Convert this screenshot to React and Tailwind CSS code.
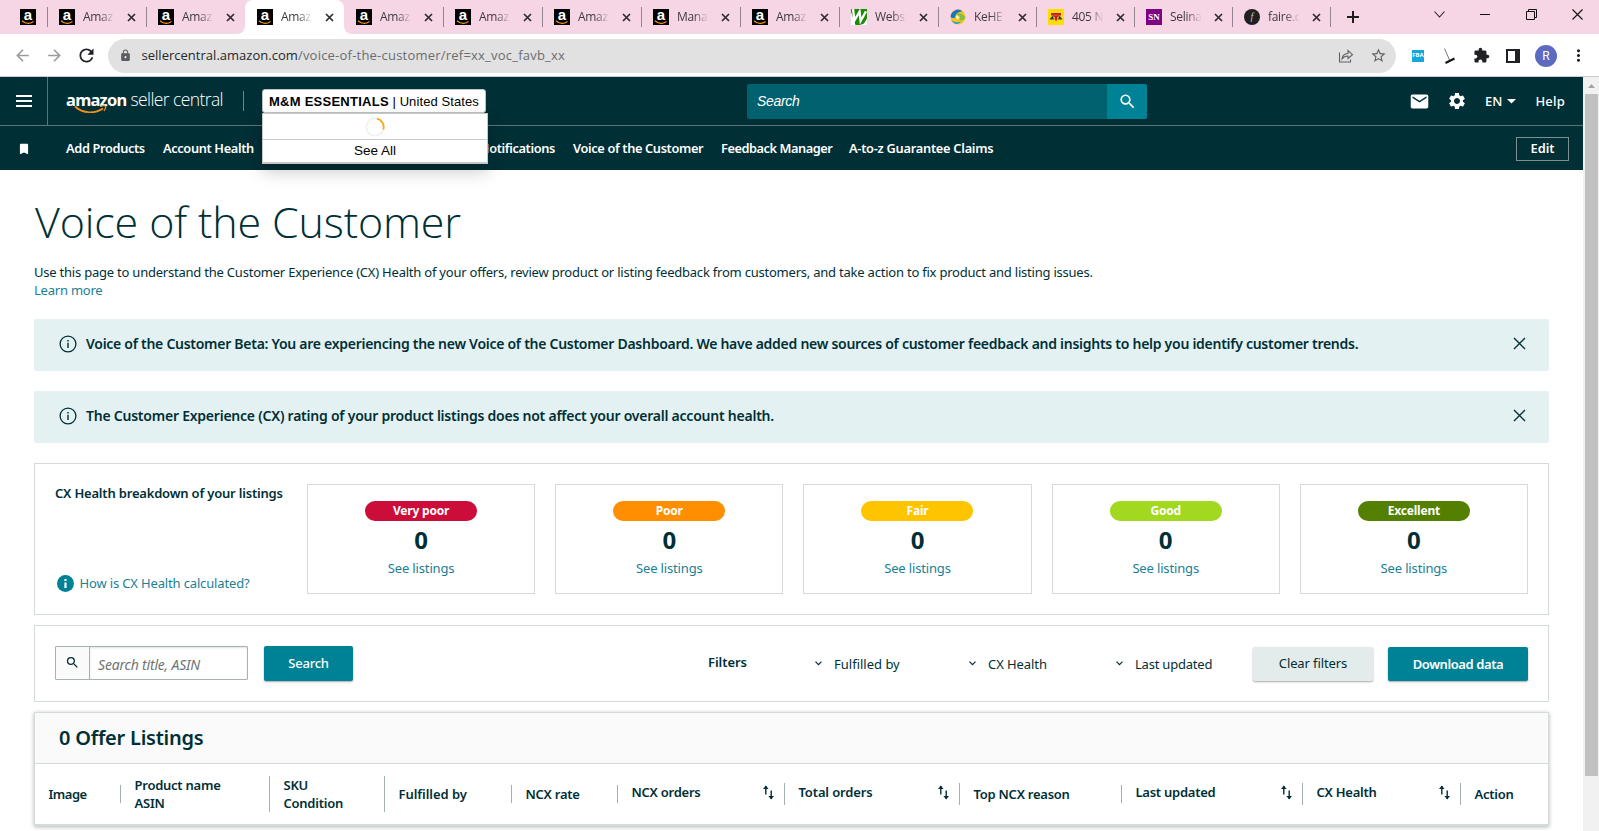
import React from 'react';
import {
  MdArrowBack, MdArrowForward, MdRefresh, MdLock, MdStarBorder, MdExtension, MdMoreVert,
  MdMail, MdSettings, MdSearch, MdBookmark,
} from 'react-icons/md';

function AmazonFavicon() {
  return (
    <span className="relative block size-4 shrink-0 bg-black text-center font-['Liberation_Sans',sans-serif] text-[15px] leading-[12px] font-bold text-white">
      a
      <svg className="absolute inset-x-0 bottom-0" width="16" height="5" viewBox="0 0 16 5">
        <path d="M2 .8C5.5 4 10 4 13.5 1.5" fill="none" stroke="#f79a1c" strokeWidth="1.2" />
      </svg>
    </span>
  );
}

function LeafFavicon() {
  return (
    <svg className="shrink-0" width="16" height="16" viewBox="0 0 16 16">
      <rect width="16" height="16" fill="#1d8a06" />
      <path d="M2 0 3.4 11.5 8.6 2.6 9.6 12 15 2.4" fill="none" stroke="#fff" strokeWidth="2.3" />
      <path d="M0 3v13h4.5zM9 16l4-1.5 3-5V16z" fill="#fff" />
    </svg>
  );
}

function SwirlFavicon() {
  return (
    <svg className="shrink-0" width="16" height="16" viewBox="0 0 16 16">
      <circle cx="8" cy="8" r="7.4" fill="#f6c51c" />
      <path d="M.6 8A7.4 7.4 0 0 1 12.500 2.200C9.500 2.500 5.500 4 5 8.500 3.500 9.500 1.500 9 .6 8z" fill="#1d74b8" />
      <path d="M6 5C9.500 3 13 5 15.300 8 14.500 11 12 12.500 9.500 11 11 8.500 9 6 6 5z" fill="#7fbf4a" />
      <path d="M1.200 11C4 13.500 8 13.800 11 12.500 9 16 3.500 16 1.200 11z" fill="#2a9fd8" />
      <path d="M6 6.200 9.500 8.200 7 10.800z" fill="#fff" />
    </svg>
  );
}

function RoadFavicon() {
  return (
    <svg className="shrink-0" width="16" height="16" viewBox="0 0 16 16">
      <rect width="16" height="16" fill="#ffdd00" />
      <path d="M3 4h10v2.500H3z" fill="#c8202f" />
      <path d="M1.500 10.500 4.500 6.500l1.500 4zM10 10.500l1.500-4 3 4z" fill="#2b3a67" />
      <path d="M4.500 6.500h7L9.500 9.500 8 12.500 6.500 9.500z" fill="#c8202f" />
      <path d="M5.500 7.500 7 9M10.500 7.500 9 9" stroke="#ffdd00" strokeWidth=".8" />
    </svg>
  );
}

function SnFavicon() {
  return (
    <span className="block size-4 shrink-0 bg-[#7d0382] text-center font-['Liberation_Serif',serif] text-[9px] leading-4 font-bold text-white">SN</span>
  );
}

function FaireFavicon() {
  return (
    <span className="block size-4 shrink-0 rounded-full bg-[#221f20] text-center font-['Liberation_Serif',serif] text-[10px] leading-[15px] text-[#c9c5c5] italic">f</span>
  );
}

const tabs = [
  { title: 'Amaz', Icon: AmazonFavicon },
  { title: 'Amaz', Icon: AmazonFavicon },
  { title: 'Amaz', Icon: AmazonFavicon, active: true },
  { title: 'Amaz', Icon: AmazonFavicon },
  { title: 'Amaz', Icon: AmazonFavicon },
  { title: 'Amaz', Icon: AmazonFavicon },
  { title: 'Mana', Icon: AmazonFavicon },
  { title: 'Amaz', Icon: AmazonFavicon },
  { title: 'Webst', Icon: LeafFavicon },
  { title: 'KeHE', Icon: SwirlFavicon },
  { title: '405 N', Icon: RoadFavicon },
  { title: 'Selina', Icon: SnFavicon },
  { title: 'faire.c', Icon: FaireFavicon },
];

function Tab({ title, Icon, active, divider, width }) {
  return (
    <div className={`relative flex h-[34px] shrink-0 items-center pl-3 ${width} ${active ? 'rounded-t-lg bg-white' : ''}`}>
      {divider && <span className="absolute top-[7px] left-0 h-5 w-px bg-[#94848f]" />}
      {active && (
        <>
          <svg className="absolute bottom-0 -left-2" width="8" height="8"><path d="M8 0v8H0a8 8 0 0 0 8-8z" fill="#fff" /></svg>
          <svg className="absolute -right-2 bottom-0" width="8" height="8"><path d="M0 0v8h8a8 8 0 0 1-8-8z" fill="#fff" /></svg>
        </>
      )}
      <Icon />
      <span className="ml-2 w-[33px] text-[12px] tracking-[-0.3px] whitespace-nowrap text-[#3f3a3e] [mask-image:linear-gradient(to_right,black_50%,transparent_96%)]">{title}</span>
      <svg className="ml-[11px] shrink-0" width="9" height="9" viewBox="0 0 9 9"><path d="M1 1l7 7M8 1 1 8" stroke="#2f2b2e" strokeWidth="1.7" /></svg>
    </div>
  );
}

function TabStrip() {
  return (
    <div className="flex h-[34px] bg-[#f6d5e4]">
      <div className="flex w-[47px] shrink-0 items-center pl-5"><AmazonFavicon /></div>
      {tabs.map((t, i) => (
        <Tab key={i} {...t} divider={i !== 2 && i !== 3} width={i < 9 ? 'w-[99px]' : 'w-[98px]'} />
      ))}
      <div className="flex flex-1 items-center">
        <span className="h-5 w-px shrink-0 bg-[#94848f]" />
        <svg className="ml-4 shrink-0" width="12" height="12" viewBox="0 0 12 12"><path d="M6 0v12M0 6h12" stroke="#1f1c1e" strokeWidth="2" /></svg>
        <div className="ml-auto flex items-center pr-4 pb-[5px]">
          <svg width="11" height="7" viewBox="0 0 11 7"><path d="M.5.500 5.500 6l5-5.500" fill="none" stroke="#222" strokeWidth="1.100" /></svg>
          <svg className="ml-[35px]" width="10" height="1"><rect width="10" height="1" fill="#111" /></svg>
          <svg className="ml-[36px]" width="11" height="11" viewBox="0 0 11 11"><path d="M.5 2.500h8v8h-8zM2.500 2.500v-2h8v8h-2" fill="none" stroke="#111" /></svg>
          <svg className="ml-[35px]" width="11" height="11" viewBox="0 0 11 11"><path d="M.5.500l10 10M10.500.500l-10 10" stroke="#111" strokeWidth="1.100" /></svg>
        </div>
      </div>
    </div>
  );
}

function Toolbar() {
  return (
    <div className="flex h-[43px] items-center border-b border-[#c9cccb] bg-white pt-px pl-[13px]">
      <MdArrowBack size={19} className="shrink-0 text-[#9a9c9f]" />
      <MdArrowForward size={19} className="ml-[13px] shrink-0 text-[#9a9c9f]" />
      <MdRefresh size={21} className="ml-[12px] shrink-0 text-[#202124]" />
      <div className="ml-[11px] flex h-[34px] w-[1288px] shrink-0 items-center rounded-full bg-[#e1e1e1] pl-[11px]">
        <MdLock size={13} className="text-[#5a5d61]" />
        <span className="ml-[9.5px] text-[13px] tracking-[0.220px] whitespace-nowrap text-[#6b6d70]">
          <span className="tracking-[0.020px] text-[#26282b]">sellercentral.amazon.com</span>/voice-of-the-customer/ref=xx_voc_favb_xx
        </span>
        <svg className="ml-auto" width="16" height="15" viewBox="0 0 16 15">
          <path d="M1.500 4.500v9.500h11v-2.500M4 11c.3-3.500 2.500-5.300 6-5.500V2.500l4.500 4.200L10 10.500V8c-2.700 0-4.500.8-6 3z" fill="none" stroke="#5f6368" strokeWidth="1.100" />
        </svg>
        <MdStarBorder size={17} className="mr-[9px] ml-[16px] text-[#5f6368]" />
      </div>
      <div className="ml-4 size-3 shrink-0 bg-[#16a5dc] text-center text-[6px] leading-[10px] font-bold text-white">FBA</div>
      <svg className="ml-[20px] shrink-0" width="11" height="16" viewBox="0 0 11 16">
        <path d="M.5.500 5.500 12" stroke="#777" />
        <path d="M1.500 15 10.500 10.500" stroke="#111" strokeWidth="2" />
      </svg>
      <MdExtension size={17} className="ml-[18px] shrink-0 text-[#202124]" />
      <svg className="ml-[16px] shrink-0" width="14" height="14" viewBox="0 0 14 14"><path d="M1 1h12v12H1z" fill="#fff" stroke="#202124" strokeWidth="2" /><path d="M9 1h4v12H9z" fill="#202124" /></svg>
      <div className="ml-[15px] size-[22px] shrink-0 rounded-full bg-[#5c6bc0] text-center font-['Roboto',sans-serif] text-[12px] leading-[22px] text-white">R</div>
      <MdMoreVert size={19} className="ml-[12px] shrink-0 text-[#202124]" />
    </div>
  );
}

function AccountSwitcher() {
  return (
    <div className="absolute top-[12px] left-[262px] z-10 font-['Liberation_Sans',Arial,sans-serif] text-[13px] text-black">
      <div className="flex h-6 w-[224px] items-center justify-center rounded-[3px] border border-[#bcc3c3] bg-white pt-px whitespace-nowrap">
        <span><b className="tracking-[0.250px]">M&amp;M ESSENTIALS</b> <span className="tracking-[0.100px]">| United States</span></span>
      </div>
      <div className="w-[226px] border border-b-2 border-[#c8c8c8] bg-white shadow-[0_8px_16px_rgba(0,0,0,0.2)]">
        <div className="flex h-[26px] items-center justify-center border-b border-[#c8c8c8]">
          <svg width="20" height="20" viewBox="0 0 20 20">
            <circle cx="10" cy="10" r="8.700" fill="none" stroke="#f0f0f0" strokeWidth="1.600" />
            <path d="M12 1.600a8.700 8.700 0 0 1 6.300 10.900" fill="none" stroke="#fba81c" strokeWidth="1.800" />
          </svg>
        </div>
        <div className="flex h-[22px] items-center justify-center pt-px text-[13.500px]">See All</div>
      </div>
    </div>
  );
}

function SiteHeader() {
  return (
    <header className="relative h-[93px] bg-[#002f36] text-white">
      <div className="flex h-[49px] items-center border-b border-[#5c7377]">
        <div className="flex h-full w-[48px] shrink-0 flex-col items-center justify-center gap-[3px] border-r border-[#5c7377] *:h-0.5 *:w-4 *:bg-white">
          <span /><span /><span />
        </div>
        <div className="relative ml-[18px] flex w-[160px] items-baseline pb-1 whitespace-nowrap">
          <span className="text-[16.500px] font-bold tracking-[-0.750px]">amazon</span>
          <span className="ml-[4px] font-['Open_Sans',sans-serif] text-[17.500px] font-light tracking-[-0.600px]">seller central</span>
          <svg className="absolute top-[19px] left-[8px]" width="34" height="9" viewBox="0 0 34 9">
            <path d="M1 1.500C9 8.800 21 8.800 29 3.500" fill="none" stroke="#f5931f" strokeWidth="1.700" />
            <path d="M26 1.500c2.500-.8 5-.8 5.500-.2.500.8-.3 3-1.500 4.700" fill="none" stroke="#f5931f" strokeWidth="1.300" />
          </svg>
        </div>
        <span className="ml-[17px] h-5 w-px bg-[#6d8285]" />
        <div className="ml-[503px] flex h-[35px] w-[400px] shrink-0">
          <div className="flex flex-1 items-center rounded-l-[2px] bg-[#00616f] pt-px pl-[10px] font-['Liberation_Sans',Arial,sans-serif] text-[14px] tracking-[-0.300px] italic">Search</div>
          <div className="flex w-10 items-center justify-center rounded-r-[2px] bg-[#008296]"><MdSearch size={19} /></div>
        </div>
        <MdMail size={21} className="ml-auto shrink-0" />
        <MdSettings size={20} className="ml-[17px] shrink-0" />
        <span className="ml-[18px] pt-px text-[13px] font-medium">EN</span>
        <svg className="ml-[5px] shrink-0" width="9" height="5"><path d="M0 0h9L4.500 4.500z" fill="#fff" /></svg>
        <span className="mr-[18px] ml-[19px] pt-px text-[13px] font-medium tracking-[0.200px]">Help</span>
      </div>
      <nav className="flex h-11 items-center pt-px text-[12.800px] font-semibold tracking-[-0.360px] whitespace-nowrap">
        <MdBookmark size={14} className="ml-[17px] shrink-0" />
        <span className="ml-[35px] w-[79px]">Add Products</span>
        <span className="ml-[18px] w-[90px]">Account Health</span>
        <span className="w-[302px] text-right">Notifications</span>
        <span className="ml-[18px] w-[130px]">Voice of the Customer</span>
        <span className="ml-[18px] w-[110px] tracking-[-0.460px]">Feedback Manager</span>
        <span className="ml-[18px] tracking-[-0.260px]">A-to-z Guarantee Claims</span>
        <span className="mr-[14px] ml-auto flex h-6 w-[53px] items-center justify-center border border-[#7d8f92] tracking-normal">Edit</span>
      </nav>
      <AccountSwitcher />
    </header>
  );
}

function Banner({ tracking, children }) {
  return (
    <div className="flex h-[52px] items-center rounded-[2px] bg-[#e4f1f2] pr-[23px] pb-[3px] pl-[25px]">
      <svg className="shrink-0" width="18" height="18" viewBox="0 0 18 18">
        <circle cx="9" cy="9" r="7.900" fill="none" stroke="#002f36" strokeWidth="1.300" />
        <path d="M9 7.800V13M9 5v1.500" stroke="#002f36" strokeWidth="1.400" />
      </svg>
      <p className={`ml-[9px] text-[14px] font-semibold whitespace-nowrap ${tracking}`}>{children}</p>
      <svg className="ml-auto shrink-0" width="13" height="13" viewBox="0 0 13 13"><path d="M1 1l11 11M12 1 1 12" stroke="#002f36" strokeWidth="1.400" /></svg>
    </div>
  );
}

const ratings = [
  { label: 'Very poor', color: 'bg-[#cc0c39]' },
  { label: 'Poor', color: 'bg-[#ff8f00]' },
  { label: 'Fair', color: 'bg-[#ffc400]' },
  { label: 'Good', color: 'bg-[#a2d820]' },
  { label: 'Excellent', color: 'bg-[#538000]' },
];

function Breakdown() {
  return (
    <section className="mt-5 flex h-[152px] border border-[#d5dbdb] p-5">
      <div className="flex w-[252px] shrink-0 flex-col justify-between pb-0.5 leading-[18px]">
        <h2 className="font-semibold tracking-[-0.190px] whitespace-nowrap">CX Health breakdown of your listings</h2>
        <a className="flex items-center tracking-[-0.150px] text-[#1a8095]">
          <svg className="mr-[6px] ml-[1.500px]" width="17" height="17" viewBox="0 0 17 17">
            <circle cx="8.500" cy="8.500" r="8.500" fill="#008296" />
            <path d="M8.500 7.500V13M8.500 4v2" stroke="#fff" strokeWidth="2.200" />
          </svg>
          How is CX Health calculated?
        </a>
      </div>
      <div className="grid h-[110px] flex-1 grid-cols-5 gap-5">
        {ratings.map((r) => (
          <div key={r.label} className="flex flex-col items-center border border-[#d5dbdb] pt-4">
            <span className={`h-5 w-28 rounded-full text-center text-[12px] leading-5 font-bold tracking-[-0.200px] text-white ${r.color}`}>{r.label}</span>
            <span className="mt-[3px] text-[24px] leading-8 font-bold">0</span>
            <a className="mt-[3px] leading-[18px] tracking-[-0.150px] text-[#1a8095]">See listings</a>
          </div>
        ))}
      </div>
    </section>
  );
}

function FilterMenu({ label, className }) {
  return (
    <div className={`flex shrink-0 items-center pt-[3px] ${className}`}>
      <svg className="mt-[-2px] mr-3 shrink-0" width="7" height="5" viewBox="0 0 7 5"><path d="M.5.700l3 3 3-3" fill="none" stroke="#002f36" strokeWidth="1.200" /></svg>
      {label}
    </div>
  );
}

function FilterBar() {
  return (
    <section className="mt-2.5 flex h-[77px] border border-[#d5dbdb] px-5 pt-5 tracking-[-0.210px] whitespace-nowrap *:h-[34px]">
      <div className="flex w-[193px] shrink-0 rounded-[1px] border border-[#a6b3b3]">
        <span className="flex w-[34px] shrink-0 justify-center border-r border-[#a6b3b3] bg-[#fafafa] pt-[8px]"><MdSearch size={15} /></span>
        <span className="flex flex-1 items-center pt-0.5 pl-2 text-[14px] tracking-[-0.190px] text-[#6f7373] italic shadow-[inset_0_1px_2px_rgba(0,0,0,0.12)]">Search title, ASIN</span>
      </div>
      <span className="ml-4 flex !h-[35px] w-[89px] shrink-0 items-center justify-center rounded-[2px] bg-[#008296] font-medium text-white shadow-[0_1px_2px_rgba(0,0,0,0.35)]">Search</span>
      <span className="ml-[355px] flex w-[107px] shrink-0 items-center font-semibold tracking-[-0.050px]">Filters</span>
      <FilterMenu label="Fulfilled by" className="w-[154px] tracking-[0px]" />
      <FilterMenu label="CX Health" className="w-[147px] tracking-[-0.080px]" />
      <FilterMenu label="Last updated" className="flex-1" />
      <span className="mt-px flex w-[120px] shrink-0 items-center justify-center rounded-[2px] bg-[#e3ebeb] tracking-[-0.100px] shadow-[0_1px_2px_rgba(0,0,0,0.35)]">Clear filters</span>
      <span className="mt-px ml-[15px] flex w-[140px] shrink-0 items-center justify-center rounded-[2px] bg-[#008296] pt-px font-semibold tracking-[-0.400px] text-white shadow-[0_1px_2px_rgba(0,0,0,0.35)]">Download data</span>
    </section>
  );
}

const columns = [
  { lines: ['Image'], width: 'w-[85px] tracking-[-0.500px]', rule: '' },
  { lines: ['Product name', 'ASIN'], width: 'w-[149px]', rule: 'h-[18px]' },
  { lines: ['SKU', 'Condition'], width: 'w-[115px]', rule: 'h-9' },
  { lines: ['Fulfilled by'], width: 'w-[127px] tracking-[-0.050px]', rule: 'h-9' },
  { lines: ['NCX rate'], width: 'w-[106px]', rule: 'h-[18px]' },
  { lines: ['NCX orders'], width: 'w-[167px]', rule: 'h-[18px]', sort: true },
  { lines: ['Total orders'], width: 'w-[175px] tracking-[-0.130px]', rule: 'h-[22px]', sort: true },
  { lines: ['Top NCX reason'], width: 'w-[162px]', rule: 'h-[22px]' },
  { lines: ['Last updated'], width: 'w-[181px]', rule: 'h-[18px]', sort: true },
  { lines: ['CX Health'], width: 'w-[158px]', rule: 'h-[22px]', sort: true },
  { lines: ['Action'], width: 'w-[88px]', rule: 'h-[22px]' },
];

function Listings() {
  return (
    <section className="mt-2.5 border border-b-2 border-[#d5dbdb] shadow-[0_1px_4px_rgba(0,0,0,0.3)]">
      <h2 className="flex h-[51px] items-center border-b border-[#d5dbdb] bg-[#fafafa] pl-6 text-[20px] font-semibold tracking-[-0.230px]">0 Offer Listings</h2>
      <div className="flex h-[60px] items-center bg-white font-semibold tracking-[-0.250px] whitespace-nowrap">
        {columns.map((c) => (
          <div key={c.lines[0]} className={`flex shrink-0 items-center ${c.width}`}>
            {c.rule && <span className={`w-px shrink-0 bg-[#a3b1b1] ${c.rule}`} />}
            <div className={`pl-[13.500px] leading-[18px] ${c.sort ? 'pb-1' : ''}`}>
              {c.lines.map((l) => <div key={l}>{l}</div>)}
            </div>
            {c.sort && (
              <svg className="mr-2.5 mb-[3px] ml-auto shrink-0" width="11" height="15" viewBox="0 0 11 15">
                <path d="M2.800 1v8.500M8.200 5.500V14" fill="none" stroke="#002f36" strokeWidth="1.400" />
                <path d="M0 4 2.800.500 5.600 4zM5.400 11l2.800 3.500L11 11z" fill="#002f36" />
              </svg>
            )}
          </div>
        ))}
      </div>
    </section>
  );
}

export default function App() {
  return (
    <div className="h-[831px] w-[1599px] overflow-hidden bg-white font-['Noto_Sans',sans-serif] text-[13px] text-[#002f36]">
      <div className="font-['Open_Sans',sans-serif]">
        <TabStrip />
        <Toolbar />
      </div>
      <div className="flex h-[754px]">
        <div className="w-[1583px] shrink-0">
          <SiteHeader />
          <main className="w-[1549px] pt-[23px] pl-[34px]">
            <h1 className="h-14 pl-px font-['Open_Sans',sans-serif] text-[43px] leading-[57px] font-light tracking-[-0.140px]">Voice of the Customer</h1>
            <div className="mt-[14px] mb-5 leading-[18px] tracking-[-0.220px]">
              <p>Use this page to understand the Customer Experience (CX) Health of your offers, review product or listing feedback from customers, and take action to fix product and listing issues.</p>
              <a className="text-[#1a8095]">Learn more</a>
            </div>
            <div className="flex flex-col gap-5">
              <Banner tracking="tracking-[-0.273px]">Voice of the Customer Beta: You are experiencing the new Voice of the Customer Dashboard. We have added new sources of customer feedback and insights to help you identify customer trends.</Banner>
              <Banner tracking="tracking-[-0.233px]">The Customer Experience (CX) rating of your product listings does not affect your overall account health.</Banner>
            </div>
            <Breakdown />
            <FilterBar />
            <Listings />
          </main>
        </div>
        <div className="flex w-4 flex-col items-center bg-[#f1f1f1] pt-[7px] pl-px">
          <svg className="shrink-0" width="7" height="4"><path d="M0 4h7L3.500 0z" fill="#a3a3a3" /></svg>
          <div className="mt-1.5 h-[682px] w-[13px] shrink-0 bg-[#c1c1c1]" />
        </div>
      </div>
    </div>
  );
}
